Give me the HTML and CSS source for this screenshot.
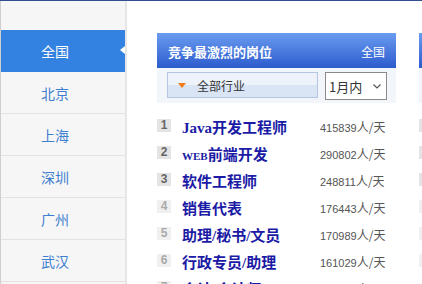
FILE: index.html
```html
<!DOCTYPE html>
<html>
<head>
    <meta charset="utf-8">
    <title>竞争最激烈的岗位</title>
    <link rel="stylesheet" href="styles.css">
</head>
<body>
    <div class="page">
        <ul class="city-nav">
            <li class="active">全国</li>
            <li>北京</li>
            <li>上海</li>
            <li>深圳</li>
            <li>广州</li>
            <li>武汉</li>
        </ul>
        <div class="main">
            <div class="panel">
                <div class="panel-head">
                    <span class="panel-title">竞争最激烈的岗位</span>
                    <span class="panel-city">全国</span>
                </div>
                <div class="filter">
                    <div class="industry"><i class="arrow"></i>全部行业</div>
                    <div class="period">1月内
                        <svg width="8" height="5" viewBox="0 0 8 5"><polyline points="0.5,0.5 4,4 7.5,0.5" fill="none" stroke="#555" stroke-width="1.2"/></svg>
                    </div>
                </div>
                <ol class="rank">
                    <li class="top"><span class="num">1</span><a class="job">Java开发工程师</a><span class="count"><b>415839</b>人/天</span></li>
                    <li class="top"><span class="num">2</span><a class="job"><small>WEB</small>前端开发</a><span class="count"><b>290802</b>人/天</span></li>
                    <li class="top"><span class="num">3</span><a class="job">软件工程师</a><span class="count"><b>248811</b>人/天</span></li>
                    <li><span class="num">4</span><a class="job">销售代表</a><span class="count"><b>176443</b>人/天</span></li>
                    <li><span class="num">5</span><a class="job">助理/秘书/文员</a><span class="count"><b>170989</b>人/天</span></li>
                    <li><span class="num">6</span><a class="job">行政专员/助理</a><span class="count"><b>161029</b>人/天</span></li>
                    <li><span class="num">7</span><a class="job">会计/会计师</a><span class="count"><b>150412</b>人/天</span></li>
                </ol>
            </div>
            <div class="panel">
                <div class="panel-head">
                    <span class="panel-title">最热门的岗位</span>
                    <span class="panel-city">全国</span>
                </div>
                <div class="filter">
                    <div class="industry"><i class="arrow"></i>全部行业</div>
                </div>
                <ol class="rank">
                    <li class="top"><span class="num">1</span></li>
                    <li class="top"><span class="num">2</span></li>
                    <li class="top"><span class="num">3</span></li>
                    <li><span class="num">4</span></li>
                    <li><span class="num">5</span></li>
                    <li><span class="num">6</span></li>
                </ol>
            </div>
        </div>
    </div>
</body>
</html>
```

FILE: styles.css
```css
html, body { margin: 0; padding: 0; overflow: hidden; }
body { background: #fff; font-family: "Noto Sans CJK SC", sans-serif; border-top: 1px solid #2f4f8f; height: 283px; }
ul, ol { list-style: none; margin: 0; padding: 0; }

.page { display: flex; height: 100%; }

.city-nav { width: 124px; flex-shrink: 0; padding-top: 29px; background: #f6f6f7; border-left: 1px solid #cfcfcf; border-right: 2px solid #e6e6e6; }
.city-nav li { position: relative; height: 41px; line-height: 42px; padding-left: 40px; border-bottom: 1px solid #e2e2e2; font-size: 14px; color: #3f7fcf; }
.city-nav li.active { background: #3381e0; color: #fff; border-bottom-color: #3381e0; }
.city-nav li.active::after { content: ""; position: absolute; right: 0; top: 16px; border-top: 4px solid transparent; border-bottom: 4px solid transparent; border-right: 5px solid #fff; }

.main { display: flex; gap: 23px; padding: 32px 0 0 30px; }
.panel { width: 239px; flex-shrink: 0; }

.panel-head { display: flex; justify-content: space-between; align-items: center; height: 35px; padding: 2px 11px 0 11px; box-sizing: border-box; background: linear-gradient(#6a9cf0, #2c5bcd); color: #fff; }
.panel-title { font-size: 13px; font-weight: bold; }
.panel-city { font-size: 12px; }

.filter { display: flex; gap: 7px; height: 35px; padding: 4px 9px 0 10px; box-sizing: border-box; background: #f2f5fa; }
.industry { display: flex; align-items: center; width: 151px; height: 26px; box-sizing: border-box; padding-left: 10px; border: 1px solid #b4c6e2; background: linear-gradient(#edf2fb 50%, #d9e5f5 50%); font-size: 12px; color: #333; }
.arrow { width: 0; height: 0; margin-right: 11px; border-left: 4px solid transparent; border-right: 4px solid transparent; border-top: 5px solid #f27a1b; }
.period { display: flex; align-items: center; justify-content: space-between; width: 62px; height: 28px; box-sizing: border-box; padding: 0 5px 0 3px; border: 1px solid #8a8a8a; background: #fff; font-size: 13px; color: #333; }

.rank { margin-top: 10px; }
.rank li { display: flex; align-items: center; height: 27px; }
.num { width: 14px; height: 13px; margin: 0 11px 3px 0; background: #f0f0f0; color: #aaa; font: bold 12px/13px "Liberation Sans", Arial, sans-serif; text-align: center; }
.rank li.top .num { background: #e4e4e4; color: #666; }
.job { width: 138px; font-family: "Liberation Serif", "Noto Sans CJK SC", serif; font-size: 15px; font-weight: bold; color: #1b1ba5; white-space: nowrap; }
.job small { font-size: 11px; }
.count { font-size: 12px; color: #555; }
.count b { font: normal 11px "Liberation Sans", Arial, sans-serif; }
```
